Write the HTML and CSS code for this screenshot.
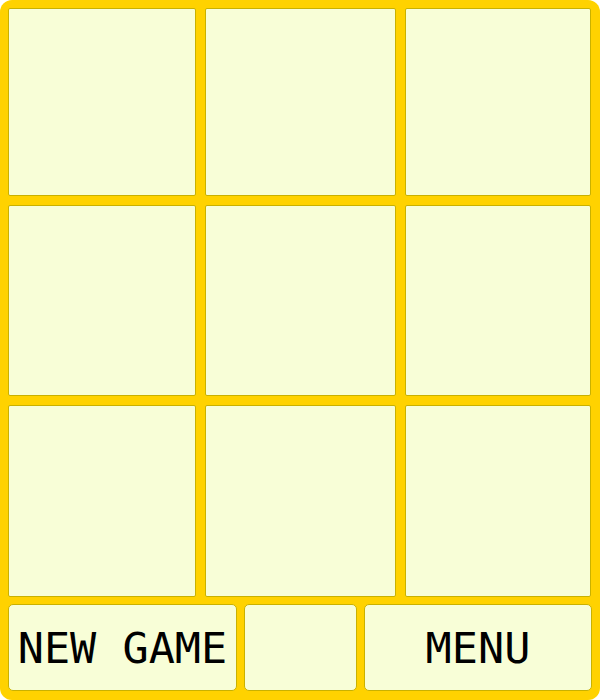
FILE: index.html
```html
<!DOCTYPE html>
<html>
<head>
<meta charset="utf-8">
<link rel="stylesheet" href="styles.css">
</head>
<body>
<div class="frame">
  <div class="board">
    <div class="cell"></div><div class="cell"></div><div class="cell"></div>
    <div class="cell"></div><div class="cell"></div><div class="cell"></div>
    <div class="cell"></div><div class="cell"></div><div class="cell"></div>
  </div>
  <div class="controls">
    <div class="btn">NEW GAME</div>
    <div class="btn"></div>
    <div class="btn">MENU</div>
  </div>
</div>
</body>
</html>
```
FILE: styles.css
```css
html, body {
  margin: 0;
  padding: 0;
  background: #ffffff;
}
.frame {
  box-sizing: border-box;
  width: 600px;
  height: 700px;
  background: #ffd200;
  border-radius: 12px;
  padding: 8px 9px 9px 8px;
  display: flex;
  flex-direction: column;
}
.board {
  display: grid;
  grid-template-columns: 188px 191px 186px;
  grid-template-rows: 188px 191px 192px;
  gap: 9px;
}
.cell {
  box-sizing: border-box;
  background: #f8fed7;
  border: 1px solid #c9b100;
  border-radius: 2px;
}
.controls {
  margin-top: 7px;
  display: grid;
  grid-template-columns: 229px 113px 228px;
  gap: 7px;
  height: 87px;
}
.btn {
  box-sizing: border-box;
  background: #f8fed7;
  border: 1px solid #c9b100;
  border-radius: 5px;
  display: flex;
  align-items: center;
  justify-content: center;
  font-family: "DejaVu Sans Mono", monospace;
  font-size: 43.5px;
  color: #000;
  padding-top: 1px;
}
```
